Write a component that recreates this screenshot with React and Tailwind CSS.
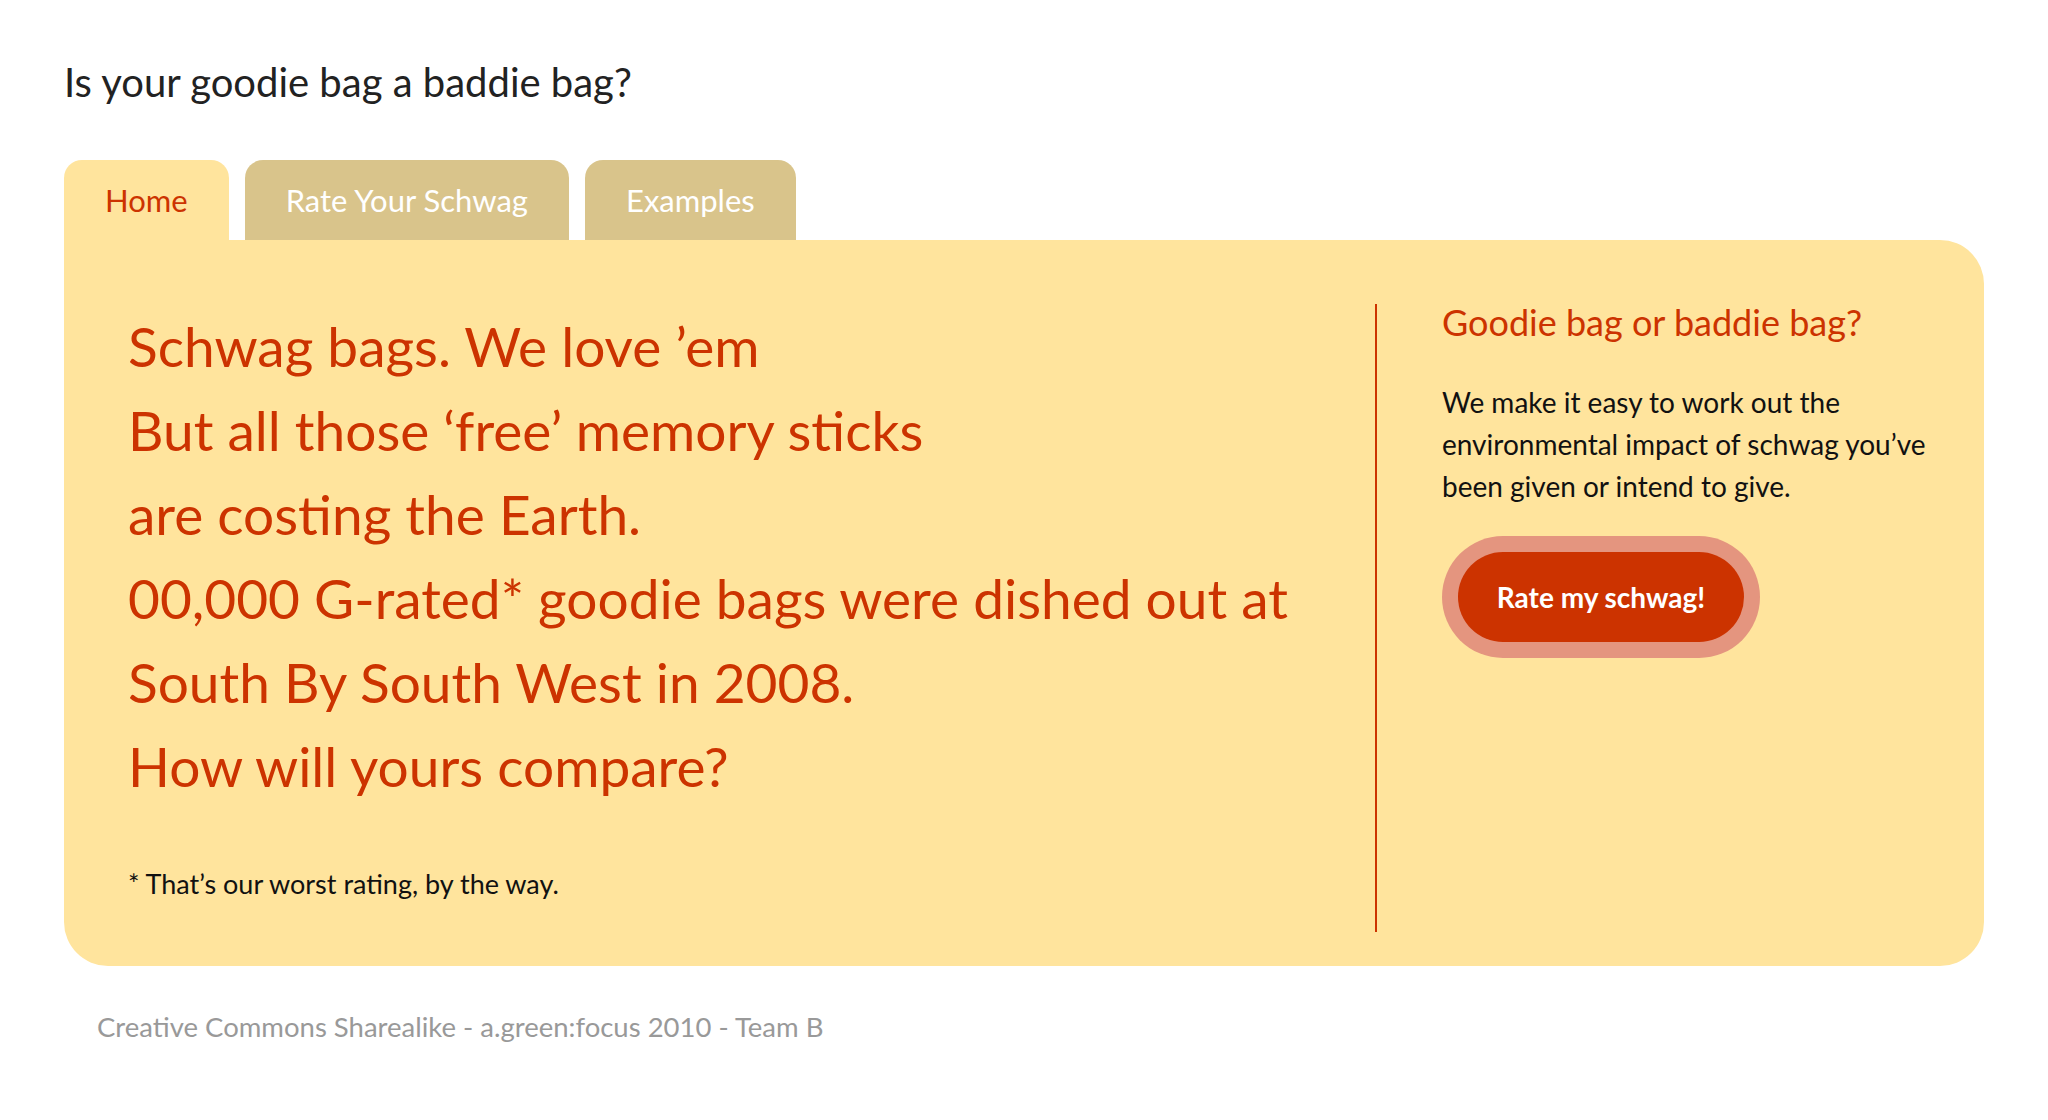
export default function App() {
  return (
    <div className="min-h-[1120px] bg-white font-['Lato','Liberation_Sans',sans-serif]">
      <div className="px-[64px] pt-[52px]">
        <h1 className="text-[40px] leading-[60px] text-[#222222] font-normal">Is your goodie bag a baddie bag?</h1>
        <nav className="mt-[48px] flex gap-[16px] h-[80px]">
          <div className="bg-[#FFE49D] rounded-t-[18px] px-[41px] flex items-center text-[31px] text-[#CC3300]">Home</div>
          <div className="bg-[#D9C48B] rounded-t-[18px] px-[41px] flex items-center text-[31px] text-white">Rate Your Schwag</div>
          <div className="bg-[#D9C48B] rounded-t-[18px] px-[41px] flex items-center text-[31px] text-white">Examples</div>
        </nav>
        <main className="bg-[#FFE49D] rounded-tr-[44px] rounded-b-[44px] pt-[64px] pb-[34px] pl-[64px] pr-[44px] flex">
          <div className="flex-1 pb-[28px]">
            <div className="text-[55px] leading-[84px] text-[#CC3300]">
              <p>Schwag bags. We love ’em</p>
              <p>But all those ‘free’ memory sticks</p>
              <p>are costing the Earth.</p>
              <p>00,000 G-rated* goodie bags were dished out at</p>
              <p>South By South West in 2008.</p>
              <p>How will yours compare?</p>
            </div>
            <p className="mt-[56px] text-[27px] leading-[40px] text-[#111111]">* That’s our worst rating, by the way.</p>
          </div>
          <aside className="w-[565px] border-l-2 border-[#CC3300] pl-[65px]">
            <h2 className="text-[36px] leading-[44px] text-[#CC3300] mt-[-4px]">Goodie bag or baddie bag?</h2>
            <p className="mt-[37px] text-[28px] leading-[42px] text-[#111111]">
              We make it easy to work out the<br />environmental impact of schwag you’ve been given or intend to give.
            </p>
            <div className="mt-[29px] inline-flex rounded-full bg-[#E4957F] p-[16px]">
              <button className="h-[90px] w-[286px] rounded-full bg-[#CC3300] text-white text-[28px] font-bold">Rate my schwag!</button>
            </div>
          </aside>
        </main>
        <footer className="pl-[33px] pt-[40px] text-[27.5px] text-[#999999]">Creative Commons Sharealike - a.green:focus 2010 - Team B</footer>
      </div>
    </div>
  );
}
